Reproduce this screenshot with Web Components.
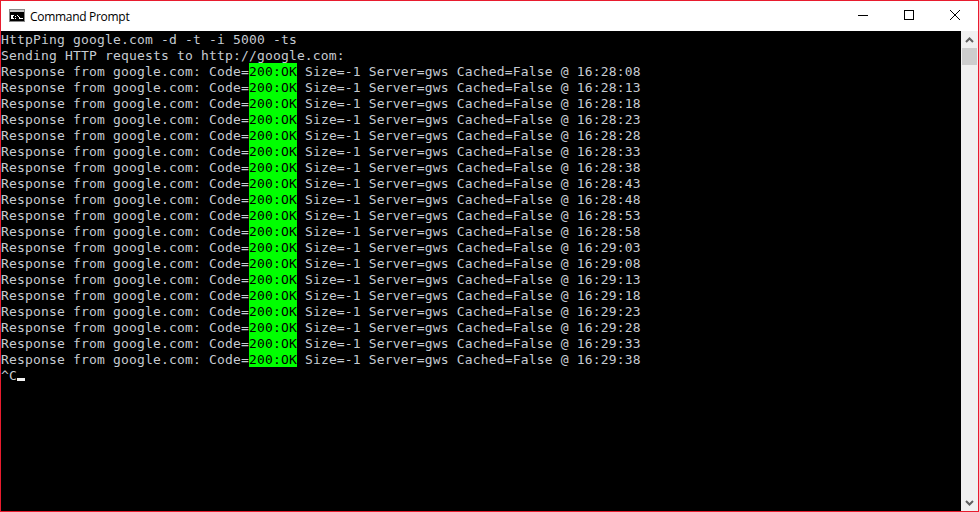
<!doctype html>
<html>
<head>
<meta charset="utf-8">
<title>Command Prompt</title>
<style>
	html, body { margin: 0; height: 100%; background: #000; }
</style>
</head>
<body>
<template id="cmd-window">
	<style>
		:host {
			display: flex;
			flex-direction: column;
			box-sizing: border-box;
			width: 979px;
			height: 512px;
			border: 1px solid #e81c2e;
			background: #fff;
			overflow: hidden;
		}
		.body {
			display: flex;
			flex: 1;
			min-height: 0;
		}
	</style>
	<cmd-titlebar></cmd-titlebar>
	<div class="body">
		<slot></slot>
		<cmd-scrollbar></cmd-scrollbar>
	</div>
</template>

<template id="cmd-titlebar">
	<style>
		:host {
			display: flex;
			align-items: center;
			height: 30px;
			flex: none;
			background: #fff;
		}
		svg.icon { display: block; margin: 0 5px 0 8px; flex: none; }
		.title {
			flex: 1;
			font: 12px "Open Sans", sans-serif;
			letter-spacing: -0.3px;
			color: #000;
		}
		.btn {
			display: flex;
			align-items: center;
			justify-content: center;
			width: 46px;
			height: 30px;
			flex: none;
		}
		.btn svg { display: block; margin-bottom: 2px; }
	</style>
	<svg class="icon" width="16" height="16" viewBox="0 0 16 16" shape-rendering="crispEdges">
		<rect x="0" y="1" width="16" height="13" fill="#8a8a8a"/>
		<rect x="1" y="2" width="14" height="2" fill="#c8c8c8"/>
		<rect x="1" y="4" width="14" height="9" fill="#000"/>
		<rect x="2" y="7" width="2" height="4" fill="#fff"/>
		<rect x="4" y="7" width="1" height="1" fill="#fff"/>
		<rect x="4" y="10" width="1" height="1" fill="#fff"/>
		<rect x="6" y="8" width="1" height="1" fill="#fff"/>
		<rect x="6" y="10" width="1" height="1" fill="#fff"/>
		<rect x="8" y="7" width="1" height="1" fill="#fff"/>
		<rect x="9" y="8" width="1" height="1" fill="#fff"/>
		<rect x="10" y="9" width="1" height="2" fill="#fff"/>
		<rect x="11" y="10" width="3" height="1" fill="#fff"/>
	</svg>
	<span class="title"><slot></slot></span>
	<div class="btn">
		<svg width="10" height="10" viewBox="0 0 10 10" shape-rendering="crispEdges"><rect x="0" y="5" width="10" height="1" fill="#000"/></svg>
	</div>
	<div class="btn">
		<svg width="10" height="10" viewBox="0 0 10 10" shape-rendering="crispEdges"><rect x="0.5" y="0.5" width="9" height="9" fill="none" stroke="#000"/></svg>
	</div>
	<div class="btn">
		<svg width="10" height="10" viewBox="0 0 10 10"><path d="M0 0L10 10M10 0L0 10" fill="none" stroke="#000" stroke-width="1"/></svg>
	</div>
</template>

<template id="cmd-scrollbar">
	<style>
		:host {
			display: flex;
			flex-direction: column;
			width: 17px;
			flex: none;
			background: #f0f0f0;
		}
		.arrow {
			display: flex;
			align-items: center;
			justify-content: center;
			height: 17px;
			flex: none;
		}
		.thumb { height: 17px; margin: 0 1px; background: #cdcdcd; flex: none; }
		.track { flex: 1; }
	</style>
	<div class="arrow">
		<svg width="9" height="6" viewBox="0 0 9 6"><path d="M1 5L4.5 1.5L8 5" fill="none" stroke="#606060" stroke-width="2"/></svg>
	</div>
	<div class="thumb"></div>
	<div class="track"></div>
	<div class="arrow">
		<svg width="9" height="6" viewBox="0 0 9 6"><path d="M1 1L4.5 4.5L8 1" fill="none" stroke="#606060" stroke-width="2"/></svg>
	</div>
</template>

<template id="cmd-console">
	<style>
		:host {
			display: block;
			flex: 1;
			min-width: 0;
			background: #000;
			color: #c6cbd2;
			font: 13px/18px "DejaVu Sans Mono", monospace;
			letter-spacing: 0.17px;
			overflow: hidden;
		}
	</style>
	<slot></slot>
</template>

<template id="cmd-line">
	<style>
		:host {
			display: block;
			height: 16px;
			white-space: pre;
		}
	</style>
	<slot></slot>
</template>

<template id="cmd-ok">
	<style>
		:host {
			display: inline-block;
			height: 16px;
			background: #0f0;
			color: #000;
			vertical-align: top;
		}
	</style>
	<slot></slot>
</template>

<template id="cmd-caret">
	<style>
		:host {
			display: inline-block;
			width: 8px;
			height: 3px;
			background: #f2f2f2;
			vertical-align: -1px;
		}
	</style>
</template>

<cmd-window>
	<cmd-console id="out"></cmd-console>
</cmd-window>

<script>
	function shadowElement(name) {
		const tpl = document.querySelector('#' + name)
		customElements.define(name, class extends HTMLElement {
			constructor() {
				super()
				this.root = this.attachShadow({mode: 'open'})
				this.root.appendChild(tpl.content.cloneNode(true))
				// the lines are white-space: pre, so the template's indents would show
				Array.from(this.root.childNodes)
					.filter((n) => n.nodeType === Node.TEXT_NODE)
					.forEach((n) => n.remove())
			}
		})
	}

	;['cmd-titlebar', 'cmd-scrollbar', 'cmd-window', 'cmd-console', 'cmd-line', 'cmd-ok', 'cmd-caret'].forEach(shadowElement)

	const win = document.querySelector('cmd-window')
	win.root.querySelector('cmd-titlebar').textContent = 'Command Prompt'

	const out = document.querySelector('#out')
	const addLine = (html) => {
		const el = document.createElement('cmd-line')
		el.innerHTML = html
		out.appendChild(el)
	}

	addLine('HttpPing google.com -d -t -i 5000 -ts')
	addLine('Sending HTTP requests to http://google.com:')

	let secs = 16 * 3600 + 28 * 60 + 8
	const pad = (n) => String(n).padStart(2, '0')
	for (let i = 0; i < 19; i++) {
		const t = pad(Math.floor(secs / 3600)) + ':' + pad(Math.floor(secs / 60) % 60) + ':' + pad(secs % 60)
		addLine('Response from google.com: Code=<cmd-ok>200:OK</cmd-ok> Size=-1 Server=gws Cached=False @ ' + t)
		secs += 5
	}
	addLine('^C<cmd-caret></cmd-caret>')
</script>
</body>
</html>
